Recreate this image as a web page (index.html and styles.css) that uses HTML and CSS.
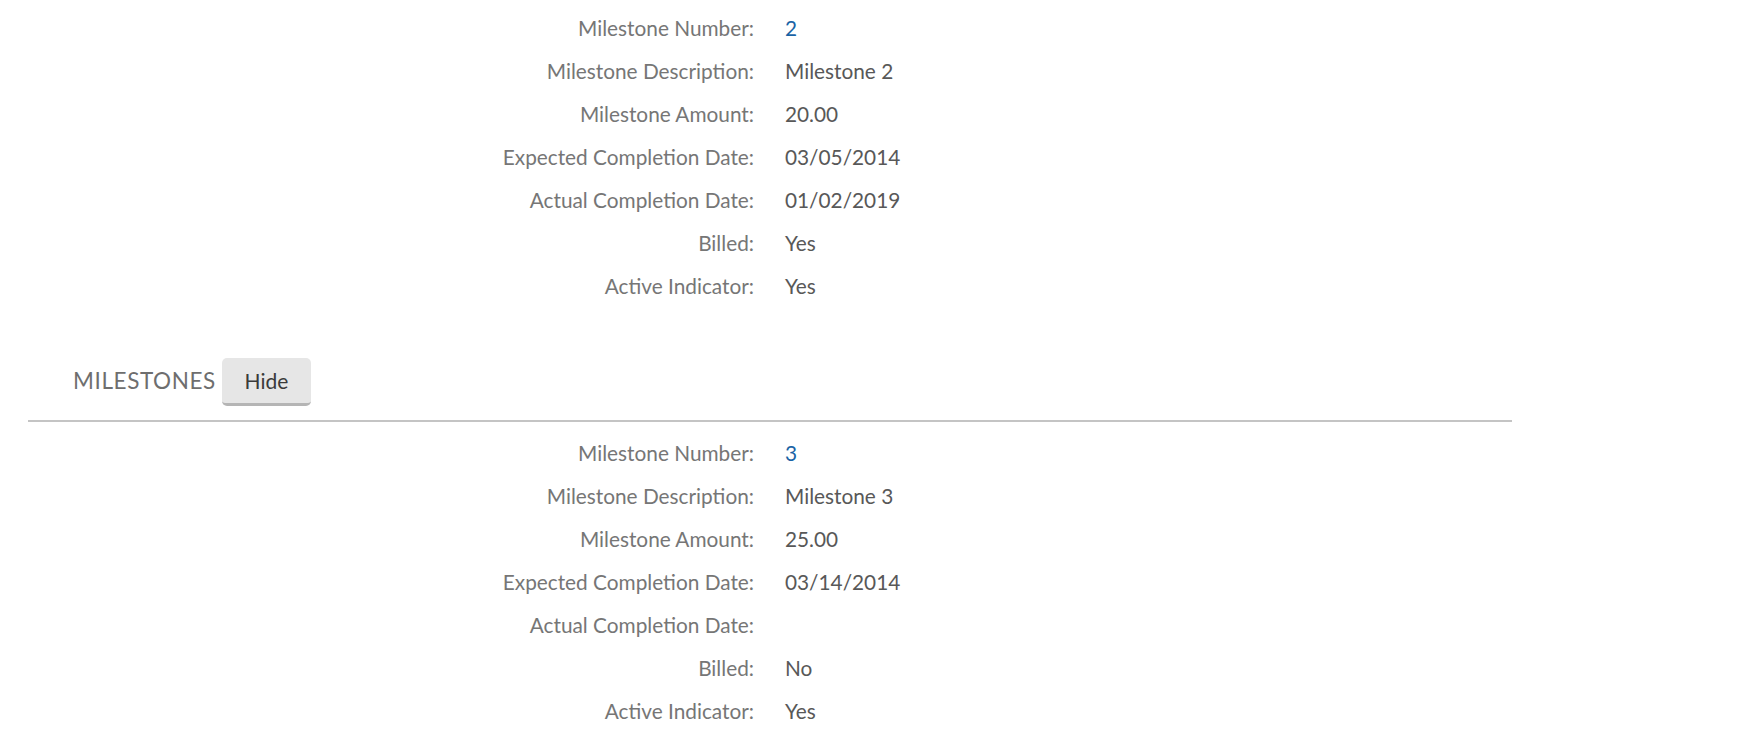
FILE: index.html
```html
<!DOCTYPE html>
<html lang="en">
<head>
  <meta charset="UTF-8">
  <title>Milestones</title>
  <link rel="stylesheet" href="styles.css">
</head>
<body>
<div class="page">
  <dl class="detail-list">
    <dt>Milestone Number:</dt>
    <dd><a href="#" class="link">2</a></dd>
    <dt>Milestone Description:</dt>
    <dd>Milestone 2</dd>
    <dt>Milestone Amount:</dt>
    <dd>20.00</dd>
    <dt>Expected Completion Date:</dt>
    <dd>03/05/2014</dd>
    <dt>Actual Completion Date:</dt>
    <dd>01/02/2019</dd>
    <dt>Billed:</dt>
    <dd>Yes</dd>
    <dt>Active Indicator:</dt>
    <dd>Yes</dd>
  </dl>

  <div class="section-header">
    <h2 class="section-title">MILESTONES</h2>
    <button class="toggle-button">Hide</button>
  </div>

  <dl class="detail-list detail-list-second">
    <dt>Milestone Number:</dt>
    <dd><a href="#" class="link">3</a></dd>
    <dt>Milestone Description:</dt>
    <dd>Milestone 3</dd>
    <dt>Milestone Amount:</dt>
    <dd>25.00</dd>
    <dt>Expected Completion Date:</dt>
    <dd>03/14/2014</dd>
    <dt>Actual Completion Date:</dt>
    <dd></dd>
    <dt>Billed:</dt>
    <dd>No</dd>
    <dt>Active Indicator:</dt>
    <dd>Yes</dd>
  </dl>
</div>
</body>
</html>
```

FILE: styles.css
```css
:root {
  --label: #767676;
  --value: #585858;
  --link: #1a63a5;
  --rule: #c4c4c4;
}

* {
  margin: 0;
  padding: 0;
  box-sizing: border-box;
}

body {
  font-family: Lato, "Open Sans", sans-serif;
  background-color: #ffffff;
  color: var(--value);
}

.page {
  width: 1484px;
  margin-left: 28px;
}

.detail-list {
  display: grid;
  grid-template-columns: 726px 1fr;
  column-gap: 31px;
  padding-top: 6px;
  font-size: 20.8px;
  line-height: 43px;
}

.detail-list dt {
  text-align: right;
  color: var(--label);
}

.detail-list dd {
  min-height: 43px;
  color: var(--value);
}

.detail-list-second {
  padding-top: 9px;
}

.link {
  color: var(--link);
  text-decoration: none;
}

.section-header {
  display: flex;
  align-items: baseline;
  gap: 6px;
  margin-top: 51px;
  padding-left: 45px;
  padding-bottom: 14px;
  border-bottom: 2px solid var(--rule);
}

.section-title {
  font-size: 22.5px;
  font-weight: 400;
  color: #6e6e6e;
  letter-spacing: 0.6px;
}

.toggle-button {
  width: 89px;
  height: 48px;
  font-family: Lato, "Open Sans", sans-serif;
  font-size: 21px;
  color: #3a3a3a;
  background-color: #e6e6e6;
  border: none;
  border-bottom: 3px solid #b5b5b5;
  border-radius: 5px;
  cursor: pointer;
}
```
